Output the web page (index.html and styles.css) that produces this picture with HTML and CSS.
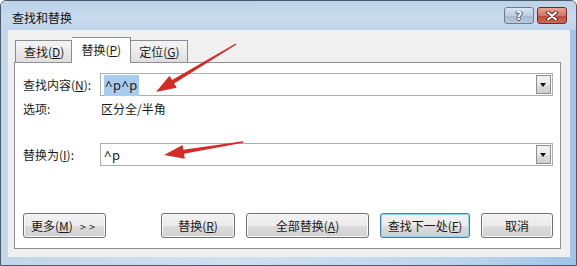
FILE: index.html
```html
<!DOCTYPE html>
<html lang="zh-CN">
<head>
  <meta charset="UTF-8">
  <title>查找和替换</title>
  <link rel="stylesheet" href="styles.css">
</head>
<body>
  <div class="window">
    <div class="titlebar">
      <span class="title">查找和替换</span>
      <div class="caption-btns">
        <span class="cap-btn help">?</span>
        <span class="cap-btn close">
          <svg width="14" height="10" viewBox="0 0 14 10">
            <path d="M3 1.5 L11 8.5 M11 1.5 L3 8.5" stroke="#5a1c18" stroke-width="4" stroke-linecap="round"/>
            <path d="M3 1.5 L11 8.5 M11 1.5 L3 8.5" stroke="#ffffff" stroke-width="2.2" stroke-linecap="round"/>
          </svg>
        </span>
      </div>
    </div>

    <div class="client">
      <div class="tabs">
        <span class="tab first">查找(<u>D</u>)</span>
        <span class="tab active">替换(<u>P</u>)</span>
        <span class="tab">定位(<u>G</u>)</span>
      </div>

      <div class="panel">
        <div class="field-row">
          <label>查找内容(<u>N</u>):</label>
          <div class="combo">
            <span class="value"><span class="sel">^p^p</span></span>
            <span class="drop"></span>
          </div>
        </div>

        <div class="option-row">
          <span class="opt-label">选项:</span>
          <span>区分全/半角</span>
        </div>

        <div class="field-row second">
          <label>替换为(<u>I</u>):</label>
          <div class="combo">
            <span class="value">^p</span>
            <span class="drop"></span>
          </div>
        </div>

        <div class="buttons">
          <button class="btn more">更多(<u>M</u>) <span class="chev">&gt; &gt;</span></button>
          <div class="btn-group">
            <button class="btn replace">替换(<u>R</u>)</button>
            <button class="btn replace-all">全部替换(<u>A</u>)</button>
            <button class="btn find-next default">查找下一处(<u>F</u>)</button>
            <button class="btn cancel">取消</button>
          </div>
        </div>
      </div>
    </div>

    <!-- red arrows drawn over the dialog -->
    <svg class="arrows" width="577" height="266" viewBox="0 0 577 266">
      <polygon points="235.6,43.4 172.1,80.0 169.5,75.7 156,92 176.7,87.7 174.1,83.4 236.4,44.6" fill="#d52b27"/>
      <polygon points="242.9,141.3 183.4,149.8 182.6,144.9 164,155 184.8,158.7 184.0,153.8 243.1,142.7" fill="#d52b27"/>
    </svg>
  </div>
</body>
</html>
```

FILE: styles.css
```css
html, body {
  margin: 0;
  padding: 0;
}

body {
  width: 577px;
  height: 266px;
  overflow: hidden;
  font-family: "Noto Sans CJK SC", "Noto Sans", sans-serif;
  font-size: 12px;
  color: #1a1a1a;
}

.window {
  position: relative;
  width: 577px;
  height: 266px;
  box-sizing: border-box;
  border: 1px solid #4a5a6c;
  border-radius: 6px 6px 0 0;
  background: linear-gradient(90deg, #c2d6ea 0%, #cfe0f1 40%, #bcd5ee 80%, #9fc4e7 100%);
  display: flex;
  flex-direction: column;
}

.titlebar {
  height: 29px;
  display: flex;
  align-items: center;
  justify-content: space-between;
  padding: 0 9px 0 11px;
  border-radius: 5px 5px 0 0;
  background: linear-gradient(180deg, #bcd2e8 0%, #c8dbee 60%, #bed4ea 100%);
}

.title {
  font-size: 12px;
  color: #111;
  margin-top: 3px;
}

.caption-btns {
  display: flex;
  gap: 3px;
  margin-top: 0;
}

.cap-btn {
  width: 30px;
  height: 17px;
  box-sizing: border-box;
  border: 1px solid #6b7c8f;
  border-radius: 3px;
  display: flex;
  align-items: center;
  justify-content: center;
}

.help {
  background: linear-gradient(180deg, #dbe6f1 0%, #bccde0 50%, #a5b9d0 51%, #b8cadc 100%);
  color: #fff;
  font-family: "DejaVu Sans", sans-serif;
  font-weight: bold;
  font-size: 12px;
  text-shadow: 0 0 1px #3c4a5c, 1px 0 0 #4c5a6c, -1px 0 0 #4c5a6c, 0 1px 0 #4c5a6c;
}

.close {
  border-color: #6b2a24;
  background: linear-gradient(180deg, #e8a597 0%, #d27766 50%, #c04a36 51%, #d36a50 100%);
}

.client {
  flex: 1;
  margin: 0 6px 8px 7px;
  background: #f0f0f0;
  display: flex;
  flex-direction: column;
}

.tabs {
  display: flex;
  align-items: flex-end;
  height: 32px;
  padding-left: 7px;
  position: relative;
  z-index: 1;
}

.tab {
  box-sizing: border-box;
  height: 22px;
  padding: 0 7px 0 8px;
  border: 1px solid #898c95;
  border-left: none;
  border-bottom: none;
  background: linear-gradient(180deg, #f4f4f4 0%, #ebebeb 50%, #dedede 100%);
  display: flex;
  align-items: center;
}

.tab.first {
  border-left: 1px solid #898c95;
}

.tab.active {
  height: 26px;
  padding: 0 9px 2px;
  background: #fff;
  margin-bottom: -1px;
}

.panel {
  flex: 1;
  margin: 0 9px 8px 6px;
  border: 1px solid #8e9096;
  background: #fff;
  padding: 10px 7px 10px 8px;
  display: flex;
  flex-direction: column;
}

.field-row {
  display: flex;
  align-items: center;
}

.field-row label {
  width: 77px;
  flex: none;
}

.field-row.second {
  margin-top: 26px;
}

.combo {
  flex: 1;
  height: 23px;
  box-sizing: border-box;
  border: 1px solid #abadb3;
  display: flex;
  align-items: center;
  justify-content: space-between;
  padding: 1px 1px 1px 3px;
}

.value {
  font-family: "Noto Sans", sans-serif;
  font-size: 13px;
  letter-spacing: 0.5px;
}

.sel {
  background: #a6ccf0;
  padding: 1px 1px 2px;
}

.drop {
  width: 15px;
  height: 19px;
  box-sizing: border-box;
  border: 1px solid #8e8f8f;
  background: linear-gradient(180deg, #f2f2f2 0%, #ebebeb 50%, #dddddd 51%, #cfcfcf 100%);
  position: relative;
}

.drop::after {
  content: "";
  position: absolute;
  left: 3px;
  top: 7px;
  border-left: 3.5px solid transparent;
  border-right: 3.5px solid transparent;
  border-top: 4px solid #111;
}

.option-row {
  display: flex;
  height: 18px;
  align-items: center;
  margin-top: 3px;
}

.opt-label {
  width: 78px;
}

.buttons {
  margin-top: auto;
  display: flex;
  justify-content: space-between;
}

.btn-group {
  display: flex;
  gap: 11px;
}

.btn {
  height: 25px;
  box-sizing: border-box;
  border: 1px solid #707070;
  border-radius: 3px;
  background: linear-gradient(180deg, #f2f2f2 0%, #ebebeb 50%, #dddddd 51%, #cfcfcf 100%);
  font-family: "Noto Sans CJK SC", "Noto Sans", sans-serif;
  font-size: 12px;
  color: #1a1a1a;
  padding: 0;
  box-shadow: inset 0 0 0 1px #fafafa;
}

.more {
  width: 83px;
  text-align: left;
  padding-left: 7px;
}

.chev {
  font-family: "DejaVu Sans", sans-serif;
  font-size: 8px;
  margin-left: 4px;
  vertical-align: 1px;
}

.replace {
  width: 74px;
}

.replace-all {
  width: 123px;
}

.find-next {
  width: 90px;
}

.cancel {
  width: 72px;
}

.btn.default {
  border-color: #3c7fb1;
  box-shadow: inset 0 0 0 1px #8fd6f2;
}

.arrows {
  position: absolute;
  left: -1px;
  top: -1px;
  pointer-events: none;
}
```
